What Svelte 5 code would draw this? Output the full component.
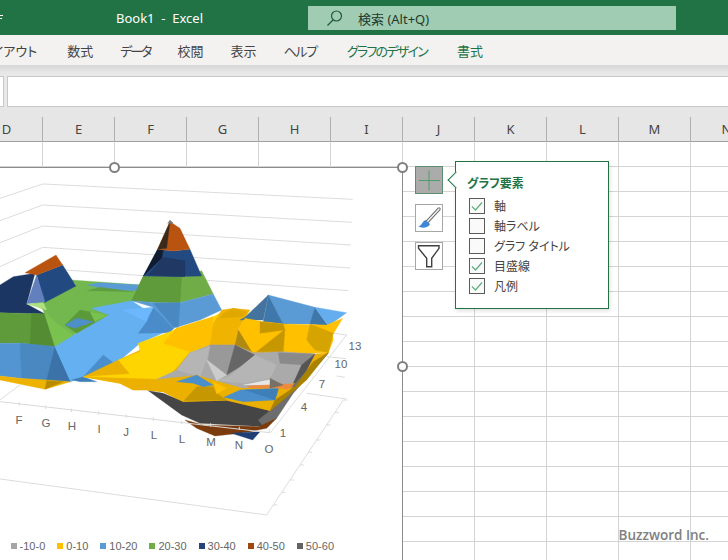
<script>
    const tabs = [
        { label: 'ページ レイアウト', kana: 'wide' },
        { label: '数式' },
        { label: 'データ', kana: 'tightest' },
        { label: '校閲' },
        { label: '表示' },
        { label: 'ヘルプ', kana: 'tight' },
        { label: 'グラフのデザイン', kana: 'tighter', chart: true },
        { label: '書式', chart: true }
    ];
    const columns = ['D', 'E', 'F', 'G', 'H', 'I', 'J', 'K', 'L', 'M', 'N'];
    const cells = Array.from({ length: 11 * 17 });

    const legend = [
        { label: '-20--10', color: '#4472c4' },
        { label: '-10-0', color: '#a5a5a5' },
        { label: '0-10', color: '#ffc000' },
        { label: '10-20', color: '#5b9bd5' },
        { label: '20-30', color: '#70ad47' },
        { label: '30-40', color: '#264478' },
        { label: '40-50', color: '#9e480e' },
        { label: '50-60', color: '#636363' }
    ];

    const elements = [
        { label: '軸', on: true },
        { label: '軸ラベル', on: false },
        { label: 'グラフ タイトル', on: false },
        { label: '目盛線', on: true },
        { label: '凡例', on: true }
    ];

    // surface facets, back to front
    const facets = [
        ['#72b84f', '100,400 228,345 215,330 330,338 425,345 395,392 325,435 230,490 165,530 130,420'],
        ['#5b9bd5', '262,345 300,338 420,345 415,362 330,360'],
        ['#5f9e3f', '262,362 300,352 400,365'],

        ['#1b3663', '0,345 40,320 105,310 80,402 135,432 0,428'],
        ['#234a80', '110,315 188,285 228,348 133,398'],
        ['#6280bd', '110,315 135,395 80,402'],
        ['#aee07f', '80,402 130,398 140,420'],
        ['#b85410', '75,308 168,255 188,285 110,315'],

        ['#5f9a3b', '0,428 135,432 165,530 60,520 0,520'],
        ['#548c34', '95,430 135,432 165,530 90,525'],
        ['#7ac24f', '130,420 165,455 228,500 165,530'],

        ['#5295d2', '0,520 60,520 165,530 212,635 140,632 60,625 0,618'],
        ['#4a88c2', '60,520 165,530 140,630 65,625'],
        ['#3b73a8', '165,530 212,635 140,630'],
        ['#eeb200', '0,618 60,625 140,630 212,635 135,658 0,630'],
        ['#b88a00', '140,632 190,635 135,658'],

        ['#64b0f0', '165,530 230,490 325,435 275,415 395,392 520,475 420,520 355,575 390,610 250,620 212,635'],
        ['#6cb8ff', '370,420 460,412 440,455'],
        ['#4a8cca', '460,412 525,470 510,488 415,490 440,455'],
        ['#4a8fcb', '310,555 355,590 390,612 250,620'],
        ['#3f7fb8', '215,630 250,620 290,635 240,635'],
        ['#5a9a3a', '195,465 240,420 325,435 230,490'],
        ['#7ac24f', '270,425 325,435 285,455'],
        ['#4f8fc9', '195,465 230,445 280,455 225,475'],

        ['#70ad47', '430,318 555,320 605,302 640,372 540,398 395,392'],
        ['#5f9a3b', '395,392 430,318 545,320 540,398 470,398'],
        ['#5b9bd5', '395,392 470,398 540,398 640,372 665,420 600,450 530,472 520,475 460,412'],
        ['#4a88c2', '460,400 540,398 535,472 520,470'],
        ['#234a80', '473,238 520,243 570,238 605,318 520,320 430,318'],
        ['#1f3864', '445,315 490,262 555,272 555,320'],
        ['#111c30', '473,238 490,240 485,265 430,318 440,300'],
        ['#b85410', '473,238 510,155 540,175 570,238 520,243'],
        ['#3a2a1c', '473,238 510,155 500,235'],
        ['#7a7a7a', '503,160 510,150 520,160'],

        ['#ecb000', '355,570 640,440 705,525 945,552 985,548 810,722 550,695 490,665 440,660 400,660 360,640 250,620'],
        ['#ffd500', '355,570 420,545 415,520 510,485 530,475 640,440 660,430 640,540 570,545 510,615 470,630 400,660 360,640 250,620 390,612'],
        ['#ecb000', '250,620 470,628 650,632 880,640 985,548 810,722 550,695 490,665 440,660 400,660 360,640'],
        ['#ffc000', '530,475 640,440 630,525 570,545 490,520'],
        ['#f0b400', '665,420 700,415 750,420 735,445 715,480 705,525 630,525 640,460'],
        ['#e0a800', '670,430 700,415 740,425 730,440 660,445'],

        ['#5b9bd5', '805,375 945,412 935,462 850,462'],
        ['#44749e', '735,442 805,375 790,450 720,450'],
        ['#3f79ab', '805,375 850,462 790,455'],
        ['#3f78a8', '945,412 985,468 930,462'],
        ['#64aef0', '945,412 1040,428 985,468'],
        ['#ffc000', '715,480 735,445 790,455 850,462 980,465 1028,445 998,495 1000,510 985,548 905,550 850,545 745,545 705,525'],
        ['#c79700', '780,455 850,462 855,480 780,490'],
        ['#b08a10', '715,480 755,545 705,525'],
        ['#c79700', '855,478 770,545 850,545'],
        ['#d6a400', '930,462 1000,490 985,548 945,540 920,510'],

        ['#aaaaaa', '470,628 530,600 570,548 630,525 705,525 760,548 850,545 945,552 900,620 880,640 820,650 730,655 650,632 590,615'],
        ['#999999', '630,525 705,525 680,615 625,570'],
        ['#b5b5b5', '570,548 630,530 620,570 600,620 530,600'],
        ['#666666', '680,615 705,525 765,555 720,590'],
        ['#8a8a8a', '835,548 945,552 910,585 840,580'],
        ['#cccccc', '620,570 680,615 650,632'],
        ['#b5b5b5', '690,618 765,555 830,585 810,625 730,640 650,632'],
        ['#555555', '905,585 945,552 900,640 880,640'],
        ['#e6e6e6', '730,645 815,628 822,645'],
        ['#f08a3c', '745,648 860,642 885,642 870,660 845,655 745,655'],
        ['#777066', '810,625 850,645 810,655'],

        ['#454545', '445,662 490,670 550,695 680,692 810,722 790,770 600,760 545,735'],
        ['#6d6d6d', '810,722 940,580 985,550 880,670 830,745 790,770 775,750'],
        ['#7a3c0f', '555,750 610,765 775,770 830,745 800,775 750,785 720,790 645,798 590,775'],
        ['#1f3f74', '695,790 780,785 758,810'],
        ['#ecb000', '440,660 470,630 530,640 590,615 640,635 650,670 735,655 860,660 880,650 810,722 680,690 550,695 490,665'],
        ['#c79700', '552,692 590,650 640,650 650,670 680,690'],
        ['#ffc000', '640,635 680,655 650,672'],
        ['#4a8fcb', '530,635 590,615 640,645 610,650 580,640'],
        ['#4a8fcb', '672,682 720,660 835,655 825,690 730,695'],
        ['#3f7fb8', '735,660 835,657 825,690'],
        ['#a98300', '810,722 825,690 885,650 940,575 985,548 920,630 850,690']
    ];

    const wallLines = [
        '0,85 128,42 1058,88',
        '0,152 128,105 1056,157',
        '0,218 128,168 1053,225',
        '0,290 128,232 1050,294',
        '128,295 1045,362',
        '0,690 60,645',
        '970,485 1040,495',
        '980,560 1038,566',
        '1010,618 1035,622',
        '920,670 1040,687',
        '810,790 1040,495',
        '1030,690 800,1035',
        '0,927 800,1035'
    ];

    const floorTicks = [
        [1030, 690], [1005, 727], [980, 765], [950, 810], [925, 847], [900, 885], [870, 930], [845, 967], [820, 1005]
    ];
    const catTicks = [
        [58, 707], [137, 717], [214, 726], [296, 734], [379, 743],
        [460, 752], [545, 762], [632, 770], [718, 780], [808, 788]
    ];
    const catLabels = [
        ['F', 19, 420], ['G', 46, 423], ['H', 72, 426], ['I', 99, 429], ['J', 126, 432],
        ['L', 154, 435], ['L', 182, 439], ['M', 211, 442], ['N', 239, 445], ['O', 269, 449]
    ];
    const seriesLabels = [
        ['13', 355, 346], ['10', 341, 364], ['7', 322, 384], ['4', 304, 407], ['1', 283, 433]
    ];
</script>

<div class="excel">
    <header class="titlebar">
        <svg class="qat" width="4" height="35" viewBox="0 0 4 35">
            <path d="M0 15.5h3M0 18.5h2" stroke="#fff" fill="none" />
        </svg>
        <div class="title">Book1  -  Excel</div>
        <div class="search">
            <svg width="18" height="18" viewBox="0 0 18 18">
                <circle cx="10.5" cy="7" r="5" fill="none" stroke="#1d5a3a" stroke-width="1.2" />
                <path d="M7 11 1.5 16.5" stroke="#1d5a3a" stroke-width="1.3" />
            </svg>
            <span>検索 (Alt+Q)</span>
        </div>
    </header>

    <nav class="tabs">
        {#each tabs as tab}
            <span class="tab {tab.kana ?? ''}" class:chart-tab={tab.chart}>{tab.label}</span>
        {/each}
    </nav>

    <div class="formula">
        <div class="namebox"></div>
        <div class="input"></div>
    </div>

    <div class="headers">
        {#each columns as col}
            <div class="col">{col}</div>
        {/each}
    </div>

    <div class="sheet">
        <div class="cells">
            {#each cells as _}
                <div class="cell"></div>
            {/each}
        </div>

        <div class="chart">
            <svg width="402" height="392" viewBox="0 168 402 392">
                <g transform="translate(0 170) scale(0.3333)">
                    <g fill="none" stroke="#dcdcdc" stroke-width="3">
                        {#each wallLines as line}
                            <polyline points={line} />
                        {/each}
                        {#each floorTicks as [x, y]}
                            <path d="M{x} {y}h12" />
                        {/each}
                    </g>
                    <g class="surface">
                        {#each facets as [color, points]}
                            <polygon {points} fill={color} stroke={color} stroke-width="1" />
                        {/each}
                    </g>
                    <g fill="none" stroke="#d9d9d9" stroke-width="3">
                        <polyline points="0,695 808,788" />
                        {#each catTicks as [x, y]}
                            <path d="M{x} {y}v-10" />
                        {/each}
                    </g>
                </g>
                <g class="axis">
                    {#each catLabels as [text, x, y]}
                        <text {x} {y}>{text}</text>
                    {/each}
                    {#each seriesLabels as [text, x, y]}
                        <text {x} {y}>{text}</text>
                    {/each}
                </g>
            </svg>

            <div class="legend">
                {#each legend as item}
                    <div class="legend-item">
                        <i style="background: {item.color}"></i>
                        <span>{item.label}</span>
                    </div>
                {/each}
            </div>
        </div>

        <span class="handle h1"></span>
        <span class="handle h2"></span>
        <span class="handle h3"></span>

        <div class="tools">
            <div class="tool active">
                <svg width="26" height="26" viewBox="0 0 26 26">
                    <path d="M13 3.5v20M3 13.5h21" stroke="#4f9e6a" stroke-width="1" fill="none" />
                </svg>
            </div>
            <div class="tool">
                <svg width="26" height="26" viewBox="0 0 26 26">
                    <path d="M23 4 11 17" stroke="#6e6e6e" stroke-width="3.4" stroke-linecap="round" />
                    <path d="M23 4 11 17" stroke="#f4f4f4" stroke-width="1.4" stroke-linecap="round" />
                    <path d="M2 21.5C6 21 6 16.500 9.500 15L14 19C12.500 23 6 23.500 2 21.500Z" fill="#3f87d6" />
                </svg>
            </div>
            <div class="tool">
                <svg width="26" height="26" viewBox="0 0 26 26">
                    <path d="M2.500 2.700H23V5.300L15.700 15.300V23.700H10.700V15.300L2.500 5.300Z" fill="#fff" stroke="#404040" stroke-width="1.400" />
                </svg>
            </div>
        </div>

        <div class="panel">
            <h2>グラフ要素</h2>
            {#each elements as item}
                <label class="row">
                    <span class="box">
                        {#if item.on}
                            <svg width="14" height="14" viewBox="0 0 14 14">
                                <path d="M2 7.500 5.500 11 12 3.500" fill="none" stroke="#5fae82" stroke-width="1.200" />
                            </svg>
                        {/if}
                    </span>
                    <span>{item.label}</span>
                </label>
            {/each}
        </div>

        <div class="watermark">Buzzword Inc.</div>
    </div>
</div>

<style>
    :global(body) {
        margin: 0;
    }

    .excel {
        position: relative;
        width: 728px;
        height: 560px;
        overflow: hidden;
        background: #e6e6e6;
        font-family: "Noto Sans", "Noto Sans CJK JP", sans-serif;
    }

    .titlebar {
        position: relative;
        display: grid;
        grid-template-columns: 308px 368px;
        height: 35px;
        align-items: start;
        background: #217346;
        color: #fff;
    }

    .qat {
        position: absolute;
        left: 0;
        top: 0;
    }

    .title {
        padding: 9px 0 0 116px;
        font-size: 13px;
        line-height: 18px;
        white-space: pre;
    }

    .search {
        display: flex;
        align-items: center;
        gap: 14px;
        height: 24px;
        margin-top: 6px;
        padding-left: 18px;
        box-sizing: border-box;
        background: #a0ccb3;
        color: #1f3a2b;
        font-size: 13px;
    }

    .tabs {
        display: flex;
        justify-content: flex-end;
        gap: 27px;
        width: 483px;
        height: 30px;
        align-items: center;
        padding-right: 245px;
        background: #f3f2f1;
        color: #444;
        font-size: 13px;
        font-feature-settings: "palt";
        white-space: nowrap;
    }

    .tab {
        flex-shrink: 0;
    }

    .wide {
        margin-right: 3px;
    }

    .tight {
        letter-spacing: -1.300px;
    }

    .tighter {
        letter-spacing: -1.750px;
    }

    .tightest {
        letter-spacing: -2px;
    }

    .chart-tab {
        margin-left: 3px;
        color: #217346;
    }

    .formula {
        display: flex;
        gap: 3px;
        height: 42px;
        padding-top: 11px;
        box-sizing: border-box;
        background: linear-gradient(#d6d6d6, #e8e8e8 8px);
    }

    .namebox {
        width: 4px;
        height: 31px;
        box-sizing: border-box;
        background: #fff;
        border: 1px solid #c8c8c8;
        border-left: 0;
    }

    .input {
        flex: 1;
        height: 31px;
        box-sizing: border-box;
        background: #fff;
        border: 1px solid #c8c8c8;
        border-right: 0;
    }

    .headers {
        display: flex;
        height: 25px;
        margin-top: 10px;
        margin-left: -29px;
        box-shadow: inset 0 -1px 0 #a0a0a0;
    }

    .col {
        flex: 0 0 72px;
        box-sizing: border-box;
        border-right: 1px solid #b0b0b0;
        text-align: center;
        font-size: 13px;
        line-height: 24px;
        color: #444;
    }

    .sheet {
        position: relative;
        height: 418px;
        background: #fff;
        overflow: hidden;
    }

    .cells {
        display: grid;
        grid-template-columns: repeat(11, 72px);
        grid-auto-rows: 25px;
        margin-left: -29px;
    }

    .cell {
        box-sizing: border-box;
        border-right: 1px solid #d4d4d4;
        border-bottom: 1px solid #d4d4d4;
    }

    .chart {
        position: absolute;
        left: -1px;
        top: 25px;
        width: 402px;
        height: 400px;
        background: #fff;
        border: 1px solid #8c8c8c;
    }

    .chart svg {
        display: block;
    }

    .surface {
        filter: blur(0.4px);
    }

    .axis text {
        font-family: "Liberation Sans", sans-serif;
        font-size: 11.500px;
        fill: #666;
        text-anchor: middle;
        dominant-baseline: central;
    }

    .legend {
        position: absolute;
        top: 369px;
        right: 68px;
        display: flex;
        justify-content: flex-end;
        gap: 12px;
        font-family: "Liberation Sans", sans-serif;
        font-size: 11px;
        line-height: 18px;
        color: #666;
    }

    .legend-item {
        display: flex;
        flex-shrink: 0;
        align-items: center;
        gap: 3px;
    }

    .legend-item i {
        width: 6px;
        height: 6px;
    }

    .handle {
        position: absolute;
        width: 11px;
        height: 11px;
        box-sizing: border-box;
        border: 2px solid #808080;
        border-radius: 50%;
        background: #fff;
    }

    .h1 {
        left: 109px;
        top: 20px;
    }

    .h2 {
        left: 397px;
        top: 20px;
    }

    .h3 {
        left: 397px;
        top: 219px;
    }

    .tools {
        position: absolute;
        left: 415px;
        top: 24px;
        display: flex;
        flex-direction: column;
        gap: 10px;
    }

    .tool {
        width: 28px;
        height: 28px;
        box-sizing: border-box;
        background: #fff;
        border: 1px solid #a6a6a6;
    }

    .tool svg {
        display: block;
    }

    .active {
        background: #ababab;
        border-color: #5f8d74;
    }

    .panel {
        position: absolute;
        left: 455px;
        top: 19px;
        width: 154px;
        height: 148px;
        box-sizing: border-box;
        padding: 12px 0 0 13px;
        background: #fff;
        border: 1px solid #217346;
        box-shadow: 1px 2px 4px rgba(0, 0, 0, 0.12);
        font-size: 12px;
        color: #444;
        font-feature-settings: "palt";
    }

    .panel::before {
        content: "";
        position: absolute;
        left: -6px;
        top: 12px;
        width: 11px;
        height: 11px;
        background: #fff;
        border-left: 1px solid #217346;
        border-bottom: 1px solid #217346;
        transform: rotate(45deg);
    }

    .panel h2 {
        position: relative;
        margin: 0 0 2px -2px;
        height: 20px;
        font-size: 12px;
        line-height: 20px;
        font-weight: 700;
        color: #217346;
    }

    .row {
        display: flex;
        align-items: center;
        gap: 9px;
        height: 20px;
        white-space: nowrap;
    }

    .box {
        width: 16px;
        height: 16px;
        box-sizing: border-box;
        background: #fafafa;
        border: 1px solid #5a5a5a;
    }

    .box svg {
        display: block;
    }

    .watermark {
        position: absolute;
        right: 19px;
        top: 383px;
        font-family: "Open Sans", sans-serif;
        font-size: 13.500px;
        line-height: 20px;
        font-weight: 600;
        color: #808080;
    }
</style>
